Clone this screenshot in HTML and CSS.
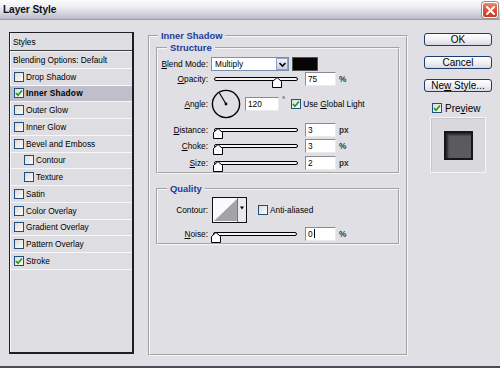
FILE: index.html
```html
<!DOCTYPE html>
<html>
<head>
<meta charset="utf-8">
<link rel="stylesheet" href="styles.css">
</head>
<body>
<div class="window">
  <div class="titlebar">
    <span class="title">Layer Style</span>
    <span class="close"><svg width="13" height="13" viewBox="0 0 13 13"><path d="M3 3 L10 10 M10 3 L3 10" stroke="#fff" stroke-width="2" stroke-linecap="round"/></svg></span>
  </div>
  <div class="main">
    <div class="list">
      <div class="list-head">Styles</div>
      <div class="row plain">Blending Options: Default</div>
      <div class="row"><span class="cb"></span>Drop Shadow</div>
      <div class="row sel"><span class="cb"><svg width="8" height="8" viewBox="0 0 8 8"><path d="M1 4 L3 6.2 L7 1.5" fill="none" stroke="#1f9a1f" stroke-width="1.7"/></svg></span><b>Inner Shadow</b></div>
      <div class="row"><span class="cb"></span>Outer Glow</div>
      <div class="row"><span class="cb"></span>Inner Glow</div>
      <div class="row"><span class="cb"></span>Bevel and Emboss</div>
      <div class="row sub"><span class="cb"></span>Contour</div>
      <div class="row sub"><span class="cb"></span>Texture</div>
      <div class="row"><span class="cb"></span>Satin</div>
      <div class="row"><span class="cb"></span>Color Overlay</div>
      <div class="row"><span class="cb"></span>Gradient Overlay</div>
      <div class="row"><span class="cb"></span>Pattern Overlay</div>
      <div class="row"><span class="cb"><svg width="8" height="8" viewBox="0 0 8 8"><path d="M1 4 L3 6.2 L7 1.5" fill="none" stroke="#1f9a1f" stroke-width="1.7"/></svg></span>Stroke</div>
    </div>

    <fieldset class="group">
      <legend>Inner Shadow</legend>
      <fieldset class="box structure">
        <legend>Structure</legend>
        <div class="frow r1">
          <span class="lbl"><u>B</u>lend Mode:</span>
          <div class="select"><span class="sel-text">Multiply</span><span class="sel-btn"><svg width="9" height="9" viewBox="0 0 9 9"><path d="M1.5 3 L4.5 6 L7.5 3" fill="none" stroke="#000" stroke-width="1.6"/></svg></span></div>
          <div class="swatch"></div>
        </div>
        <div class="frow r2">
          <span class="lbl"><u>O</u>pacity:</span>
          <div class="slider"><div class="track"></div><svg class="thumb" style="left:61px" width="10" height="11" viewBox="0 0 10 11"><path d="M5 0.5 L9.5 4.5 L9.5 10.5 L0.5 10.5 L0.5 4.5 Z" fill="#fff" stroke="#000"/></svg></div>
          <div class="field">75</div><span class="unit">%</span>
        </div>
        <div class="frow r3">
          <span class="lbl"><u>A</u>ngle:</span>
          <svg class="dial" width="30" height="30" viewBox="0 0 30 30"><circle cx="15" cy="15" r="13.6" fill="none" stroke="#000" stroke-width="1.4"/><line x1="15" y1="15" x2="8.3" y2="3.8" stroke="#000" stroke-width="1.2"/><circle cx="15" cy="15" r="1.4"/></svg>
          <div class="field wide">120</div><span class="deg">°</span>
          <span class="cb gl"><svg width="8" height="8" viewBox="0 0 8 8"><path d="M1 4 L3 6.2 L7 1.5" fill="none" stroke="#1f9a1f" stroke-width="1.7"/></svg></span><span class="cbtext">Use <u>G</u>lobal Light</span>
        </div>
        <div class="frow r4">
          <span class="lbl"><u>D</u>istance:</span>
          <div class="slider"><div class="track"></div><svg class="thumb" style="left:2px" width="10" height="11" viewBox="0 0 10 11"><path d="M5 0.5 L9.5 4.5 L9.5 10.5 L0.5 10.5 L0.5 4.5 Z" fill="#fff" stroke="#000"/></svg></div>
          <div class="field">3</div><span class="unit">px</span>
        </div>
        <div class="frow r5">
          <span class="lbl"><u>C</u>hoke:</span>
          <div class="slider"><div class="track"></div><svg class="thumb" style="left:2px" width="10" height="11" viewBox="0 0 10 11"><path d="M5 0.5 L9.5 4.5 L9.5 10.5 L0.5 10.5 L0.5 4.5 Z" fill="#fff" stroke="#000"/></svg></div>
          <div class="field">3</div><span class="unit">%</span>
        </div>
        <div class="frow r6">
          <span class="lbl"><u>S</u>ize:</span>
          <div class="slider"><div class="track"></div><svg class="thumb" style="left:2px" width="10" height="11" viewBox="0 0 10 11"><path d="M5 0.5 L9.5 4.5 L9.5 10.5 L0.5 10.5 L0.5 4.5 Z" fill="#fff" stroke="#000"/></svg></div>
          <div class="field">2</div><span class="unit">px</span>
        </div>
      </fieldset>

      <fieldset class="box quality">
        <legend>Quality</legend>
        <div class="frow q1">
          <span class="lbl">Contour:</span>
          <svg class="contour" width="35" height="26" viewBox="0 0 35 26"><rect x="0.5" y="0.5" width="34" height="25" fill="#fafafa" stroke="#111"/><path d="M2 24 L25 2 L25 24 Z" fill="#a3a3a8"/><rect x="26" y="1" width="8" height="24" fill="#e9e9ee"/><line x1="25.5" y1="1" x2="25.5" y2="25" stroke="#777"/><path d="M28 9.5 L32 9.5 L30 12.5 Z" fill="#000"/></svg>
          <span class="cb aa"></span><span class="cbtext">Anti-aliased</span>
        </div>
        <div class="frow q2">
          <span class="lbl"><u>N</u>oise:</span>
          <div class="slider"><div class="track"></div><svg class="thumb" style="left:1px" width="10" height="11" viewBox="0 0 10 11"><path d="M5 0.5 L9.5 4.5 L9.5 10.5 L0.5 10.5 L0.5 4.5 Z" fill="#fff" stroke="#000"/></svg></div>
          <div class="field noise">0<span class="caret"></span></div><span class="unit">%</span>
        </div>
      </fieldset>
    </fieldset>

    <div class="side">
      <div class="btn">OK</div>
      <div class="btn">Cancel</div>
      <div class="btn">Ne<u>w</u> Style...</div>
      <div class="preview-row"><span class="cb"><svg width="8" height="8" viewBox="0 0 8 8"><path d="M1 4 L3 6.2 L7 1.5" fill="none" stroke="#1f9a1f" stroke-width="1.7"/></svg></span><span class="pv-text">Pre<u>v</u>iew</span></div>
      <div class="preview"><div class="square"></div></div>
    </div>
  </div>
</div>
</body>
</html>
```

FILE: styles.css
```css
* { box-sizing: border-box; }
html, body { margin: 0; padding: 0; }
body {
  width: 500px;
  height: 368px;
  overflow: hidden;
  background: #e0dfe3;
  font-family: "Liberation Sans", Arial, sans-serif;
  font-size: 8.3px;
  color: #000;
}
u { text-decoration: underline; text-underline-offset: 1px; }

.window {
  width: 500px;
  height: 368px;
  background: #e0dfe3;
  border-bottom: 2px solid #4d4d5a;
  display: flex;
  flex-direction: column;
}

.titlebar {
  height: 20px;
  flex: none;
  display: flex;
  align-items: center;
  justify-content: space-between;
  padding: 0 2px 0 3px;
  background: linear-gradient(#fdfdfe 0%, #eeeef4 35%, #d0d0dc 75%, #babac9 100%);
  border-bottom: 1px solid #9a9aa8;
}
.title {
  font-weight: bold;
  font-size: 10.2px;
  letter-spacing: -0.1px;
  color: #111;
}
.close {
  width: 16px;
  height: 16px;
  border-radius: 3px;
  border: 1px solid #fff;
  box-shadow: 0 0 0 1px #a08a8a;
  background: linear-gradient(#ee8a6c, #d9533a 50%, #c23e24);
  display: flex;
  align-items: center;
  justify-content: center;
  margin-top: 1px;
}

.main {
  display: flex;
  align-items: flex-start;
  padding: 12px 0 0 9px;
}

/* style list */
.list {
  width: 125px;
  height: 322px;
  border: 1px solid #1e1e24;
  border-right-width: 2px;
  border-bottom-width: 2px;
  background: #dedde2;
  box-shadow: inset 1px 0 0 #f7f7f9;
  display: flex;
  flex-direction: column;
}
.list-head {
  height: 18px;
  flex: none;
  padding-left: 3px;
  display: flex;
  align-items: center;
  border-bottom: 1px solid #3a3a42;
  box-shadow: 0 1px 0 #f7f7f9;
  margin-bottom: 1px;
}
.row {
  height: 16.75px;
  flex: none;
  display: flex;
  align-items: center;
  padding-left: 4px;
  border-bottom: 1px solid #f6f6f8;
}
.row.plain { padding-left: 3px; }
.row.sub { padding-left: 14px; }
.row.sel { background: #bfbfcb; }
.row b { font-weight: bold; letter-spacing: 0.2px; }

.cb {
  width: 10px;
  height: 10px;
  flex: none;
  border: 1px solid #1f4f80;
  background: linear-gradient(135deg, #dcdcd6, #fbfbfb);
  margin-right: 2px;
  display: flex;
  align-items: center;
  justify-content: center;
}

/* fieldsets */
fieldset {
  margin: 0;
  min-width: 0;
  border: 2px groove #f6f6f8;
}
legend {
  font-weight: bold;
  font-size: 9.4px;
  line-height: 10px;
  color: #1b3c9c;
  padding: 0 3px;
}
.group {
  margin: -1px 0 0 14px;
  width: 260px;
  height: 325px;
  padding: 2px 6px 0 6px;
}
.group > legend { margin-left: 2px; }
.box { width: 244px; padding: 0; }
.box > legend { margin-left: 9px; }
.structure { padding-top: 4px; padding-bottom: 2px; }
.quality { margin-top: 10px; padding-top: 3px; padding-bottom: 3px; }

.frow {
  display: flex;
  align-items: center;
  height: 14px;
}
.lbl {
  width: 50px;
  flex: none;
  text-align: right;
  margin-right: 3px;
  white-space: nowrap;
}
.r2 { margin-top: 1px; }
.r3 { margin-top: 3px; height: 30px; }
.r4 { margin-top: 4px; }
.r5 { margin-top: 2px; }
.r6 { margin-top: 3px; }
.q1 { height: 26px; }
.q2 { margin-top: 4px; height: 13px; }

.select {
  width: 78px;
  height: 14px;
  border: 1px solid #7b8fae;
  background: #fff;
  display: flex;
  align-items: center;
  justify-content: space-between;
}
.sel-text { padding-left: 3px; }
.sel-btn {
  width: 12px;
  height: 12px;
  background: linear-gradient(#f2f2f6, #c9cfdf);
  border: 1px solid #8fa2c6;
  display: flex;
  align-items: center;
  justify-content: center;
}
.swatch {
  width: 26px;
  height: 14px;
  background: #050505;
  border: 1px solid #555;
  margin-left: 3px;
}

.slider {
  position: relative;
  width: 90px;
  height: 14px;
  flex: none;
}
.track {
  position: absolute;
  left: 3px;
  top: 5px;
  width: 84px;
  height: 4px;
  border: 1px solid #000;
  border-radius: 2px;
  background: #f4f4f4;
}
.thumb { position: absolute; top: 5px; }

.field {
  width: 31px;
  height: 14px;
  margin-left: 4px;
  background: #fff;
  border: 1px solid;
  border-color: #8a8a90 #e9e9ee #e9e9ee #8a8a90;
  padding-left: 2px;
  display: flex;
  align-items: center;
}
.field.wide { width: 34px; margin-left: 4px; }
.unit { margin-left: 3px; font-weight: bold; color: #333; }
.deg { margin-left: 3px; align-self: flex-start; margin-top: 6px; font-size: 8px; }
.dial { margin-left: 0; flex: none; }
.cb.gl { margin-left: 6px; }
.cbtext { white-space: nowrap; }
.contour { margin-left: 1px; flex: none; }
.cb.aa { margin-left: 11px; }
.noise { position: relative; }
.caret {
  display: inline-block;
  width: 1px;
  height: 9px;
  background: #000;
  margin-left: 1px;
}
.q2 .slider { margin-left: -1px; }
.q2 .field { margin-left: 5px; }

/* right side */
.side {
  margin-left: 16px;
  width: 68px;
  display: flex;
  flex-direction: column;
  padding-top: 1px;
}
.btn {
  height: 13px;
  margin-bottom: 10px;
  border: 1px solid #1d3d6e;
  border-radius: 3px;
  background: linear-gradient(#ffffff, #f1f1f4 50%, #d8d8e2);
  font-size: 10px;
  line-height: 11px;
  text-align: center;
}
.preview-row {
  display: flex;
  align-items: center;
  height: 10px;
  margin-top: 1px;
  padding-left: 8px;
}
.pv-text { font-size: 10px; margin-left: 1px; }
.preview {
  margin: 4px 0 0 6px;
  width: 56px;
  height: 56px;
  background: #d9d9dd;
  border: 1px solid #f4f4f6;
  box-shadow: inset 1px 1px 0 #c8c8cc;
  display: flex;
  align-items: center;
  justify-content: center;
}
.square {
  width: 29px;
  height: 29px;
  background: #5b5b5d;
  border: 2px solid #161616;
  box-shadow: inset 2px 2px 2px rgba(0,0,0,0.55);
}
```
